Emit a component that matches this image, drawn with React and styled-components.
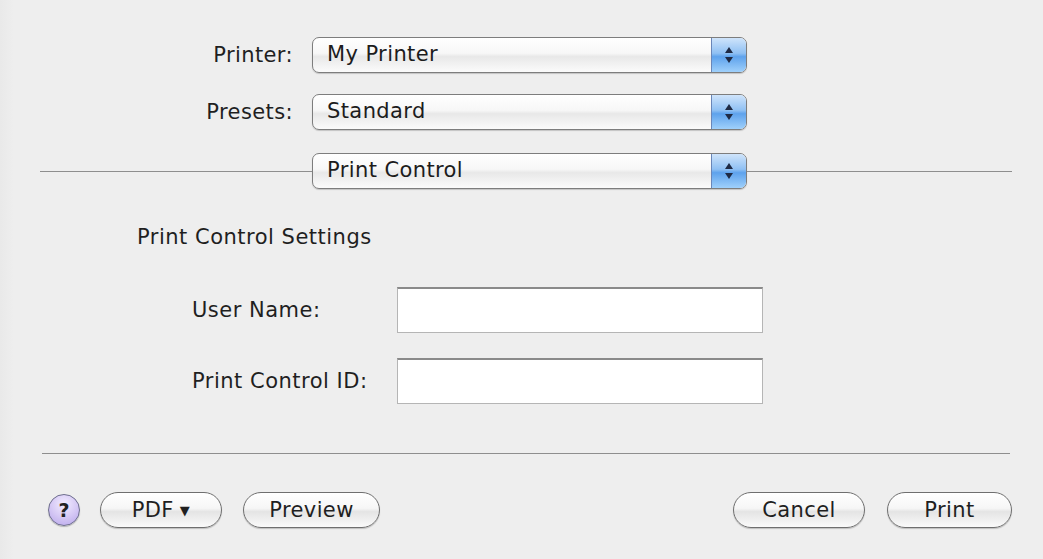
import React from "react";
import styled, { createGlobalStyle } from "styled-components";

const Global = createGlobalStyle`
  html, body { margin: 0; padding: 0; background: #ececec; }
  body { font-family: "DejaVu Sans", "Liberation Sans", sans-serif; color: #222; }
`;

const Page = styled.div`
  width: 1043px;
  height: 559px;
  box-sizing: border-box;
  padding: 37px 31px 0 40px;
  display: flex;
  flex-direction: column;
  background: linear-gradient(90deg, #e9e9e9 0, #eeeeee 14px, #eeeeee 100%);
`;

const PopupRow = styled.div`
  display: flex;
  align-items: center;
  margin-top: ${(p) => p.$mt || 0}px;
`;

const Label = styled.div`
  width: 272px;
  box-sizing: border-box;
  text-align: right;
  padding-right: 19px;
  font-size: 21px;
  letter-spacing: 0.4px;
  color: #1f1f1f;
`;

const Line = styled.div`
  height: 1px;
  background: #8e8e8e;
  flex: ${(p) => (p.$fixed ? `0 0 ${p.$fixed}px` : "1")};
`;

const Popup = styled.div`
  width: 435px;
  height: 36px;
  box-sizing: border-box;
  border: 1px solid #7d7d7d;
  border-radius: 7px;
  display: flex;
  overflow: hidden;
  background: linear-gradient(#ffffff 0%, #f7f7f7 45%, #e8e8e8 55%, #fbfbfb 100%);
  box-shadow: 0 1px 1px rgba(0, 0, 0, 0.18);
`;

const PopupText = styled.div`
  flex: 1;
  font-size: 21px;
  letter-spacing: 0.4px;
  line-height: 33px;
  padding-left: 14px;
  color: #1c1c1c;
`;

const Stepper = styled.div`
  width: 34px;
  border-left: 1px solid #6a86b8;
  background: linear-gradient(#cfe4fb 0%, #8fc0f3 45%, #5ea2ec 55%, #9fd0fb 100%);
  display: flex;
  flex-direction: column;
  align-items: center;
  justify-content: center;
  gap: 4px;
`;

const Tri = styled.div`
  width: 0;
  height: 0;
  border-left: 4px solid transparent;
  border-right: 4px solid transparent;
  ${(p) =>
    p.$up
      ? "border-bottom: 6px solid #1f2a44;"
      : "border-top: 6px solid #1f2a44;"}
`;

const SectionTitle = styled.div`
  margin-top: 35px;
  padding-left: 97px;
  font-size: 21px;
  letter-spacing: 0.5px;
  line-height: 26px;
  color: #1f1f1f;
`;

const FieldRow = styled.div`
  display: flex;
  align-items: center;
  margin-top: ${(p) => p.$mt}px;
  padding-left: 152px;
`;

const FieldLabel = styled.div`
  width: 205px;
  font-size: 21px;
  letter-spacing: 0.5px;
  color: #1f1f1f;
`;

const TextBox = styled.div`
  width: 366px;
  height: 46px;
  box-sizing: border-box;
  background: #fff;
  border: 1px solid #b5b5b5;
  border-top: 2px solid #8a8a8a;
`;

const BottomLine = styled.div`
  margin-top: 49px;
  margin-left: 2px;
  margin-right: 2px;
  height: 1px;
  background: #8e8e8e;
`;

const ButtonBar = styled.div`
  margin-top: 38px;
  display: flex;
  align-items: center;
  padding-left: 8px;
`;

const Help = styled.div`
  width: 32px;
  height: 32px;
  border-radius: 50%;
  box-sizing: border-box;
  border: 1px solid #6e6e8e;
  background: radial-gradient(circle at 50% 30%, #f2ecff 0%, #d6c9f5 50%, #b7a5ea 100%);
  display: flex;
  align-items: center;
  justify-content: center;
  font-weight: bold;
  font-size: 19px;
  color: #222;
  margin-right: 20px;
  box-shadow: 0 1px 1px rgba(0, 0, 0, 0.25);
`;

const Pill = styled.div`
  width: ${(p) => p.$w}px;
  height: 36px;
  box-sizing: border-box;
  border: 1px solid #6f6f6f;
  border-radius: 18px;
  display: flex;
  align-items: center;
  justify-content: center;
  font-size: 21px;
  letter-spacing: 0.4px;
  color: #1f1f1f;
  background: linear-gradient(#ffffff 0%, #f6f6f6 45%, #e4e4e4 55%, #fafafa 100%);
  box-shadow: 0 1px 1px rgba(0, 0, 0, 0.2);
  margin-left: ${(p) => p.$ml || 0}px;
  gap: 6px;
`;

const Spacer = styled.div`
  flex: 1;
`;

const SmallDown = styled.span`
  font-size: 13px;
`;

function Select({ value }) {
  return (
    <Popup>
      <PopupText>{value}</PopupText>
      <Stepper>
        <Tri $up />
        <Tri />
      </Stepper>
    </Popup>
  );
}

export default function App() {
  return (
    <>
      <Global />
      <Page>
        <PopupRow>
          <Label>Printer:</Label>
          <Select value="My Printer" />
        </PopupRow>
        <PopupRow $mt={21}>
          <Label>Presets:</Label>
          <Select value="Standard" />
        </PopupRow>
        <PopupRow $mt={23}>
          <Line $fixed={272} />
          <Select value="Print Control" />
          <Line />
        </PopupRow>
        <SectionTitle>Print Control Settings</SectionTitle>
        <FieldRow $mt={37}>
          <FieldLabel>User Name:</FieldLabel>
          <TextBox />
        </FieldRow>
        <FieldRow $mt={25}>
          <FieldLabel>Print Control ID:</FieldLabel>
          <TextBox />
        </FieldRow>
        <BottomLine />
        <ButtonBar>
          <Help>?</Help>
          <Pill $w={122}>
            PDF <SmallDown>▼</SmallDown>
          </Pill>
          <Pill $w={137} $ml={21}>Preview</Pill>
          <Spacer />
          <Pill $w={132}>Cancel</Pill>
          <Pill $w={125} $ml={22}>Print</Pill>
        </ButtonBar>
      </Page>
    </>
  );
}
